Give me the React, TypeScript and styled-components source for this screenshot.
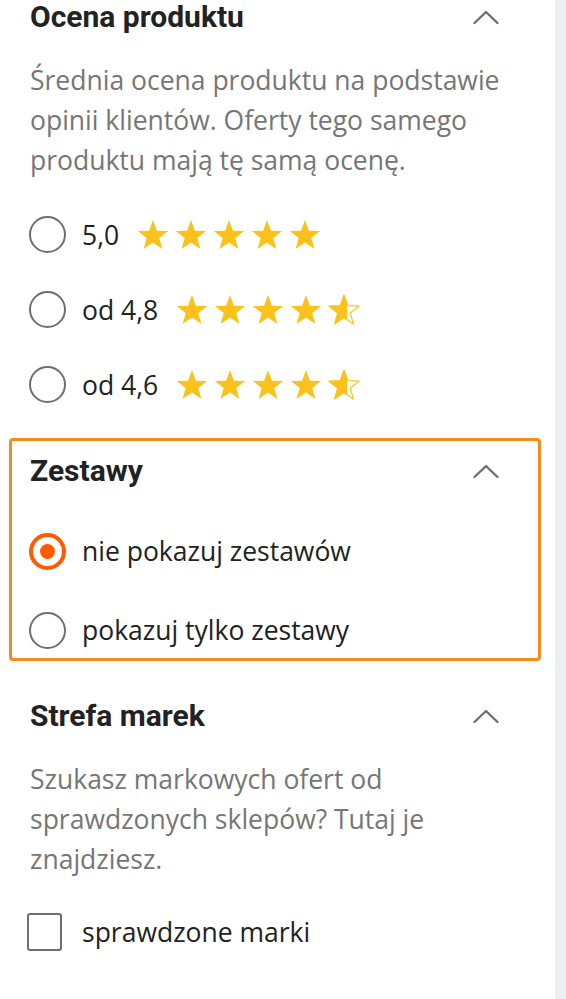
import React from 'react';
import styled, { createGlobalStyle } from 'styled-components';

const GlobalStyle = createGlobalStyle`
  html, body {
    margin: 0;
    padding: 0;
    background: #ffffff;
    overflow: hidden;
  }
`;

const Page = styled.div`
  display: flex;
  width: 566px;
  height: 999px;
  overflow: hidden;
`;

const Panel = styled.div`
  width: 555px;
  background: #ffffff;
`;

const Scrollbar = styled.div`
  flex: 1;
  background: #eceff1;
`;

const Section = styled.section<{ $highlighted?: boolean }>`
  margin: 0 14px 0 9px;
  padding: 0 18px;
  border: 3px solid ${(p) => (p.$highlighted ? '#f58a1f' : 'transparent')};
  border-radius: 4px;
`;

const Header = styled.div`
  display: flex;
  align-items: center;
  justify-content: space-between;
  height: 28px;
  padding-right: 21px;
`;

const Title = styled.h3`
  margin: 0;
  font-family: Roboto, 'Liberation Sans', sans-serif;
  font-weight: 700;
  font-size: 30px;
  line-height: 28px;
  color: #222222;
`;

const Description = styled.p`
  margin: 0;
  font-family: 'Open Sans', 'Liberation Sans', sans-serif;
  font-size: 26.5px;
  line-height: 40px;
  color: #767676;
`;

const OptionList = styled.div<{ $gap?: number }>`
  display: flex;
  flex-direction: column;
  gap: ${(p) => p.$gap ?? 0}px;
`;

const Option = styled.label<{ $height: number }>`
  display: flex;
  align-items: center;
  height: ${(p) => p.$height}px;
  gap: 16px;
  font-family: 'Open Sans', 'Liberation Sans', sans-serif;
  font-size: 26.5px;
  color: #222222;
`;

const Radio = styled.span<{ $checked?: boolean }>`
  box-sizing: border-box;
  flex: none;
  display: flex;
  align-items: center;
  justify-content: center;
  width: 37px;
  height: 37px;
  margin-left: -1px;
  border-radius: 50%;
  border: ${(p) => (p.$checked ? '4px solid #ff5a00' : '2px solid #6f6f6f')};

  &::after {
    content: '';
    display: ${(p) => (p.$checked ? 'block' : 'none')};
    width: 15px;
    height: 15px;
    border-radius: 50%;
    background: #ff5a00;
  }
`;

const Checkbox = styled.span`
  box-sizing: border-box;
  flex: none;
  width: 35px;
  height: 38px;
  margin: 0 4px 0 -3px;
  border: 2px solid #6f6f6f;
  border-radius: 3px;
`;

const Stars = styled.span`
  display: flex;
  gap: 6px;
  margin-left: 2px;
`;

const Chevron = () => (
  <svg width="26" height="16" viewBox="0 0 26 16" fill="none">
    <path d="M1.5 14 L13 3 L24.5 14" stroke="#6f6f6f" strokeWidth="2.4" strokeLinecap="round" strokeLinejoin="round" />
  </svg>
);

const STAR =
  'M16 1 L19.9 11.7 L31.2 12.1 L22.3 19 L25.4 29.9 L16 23.6 L6.6 29.9 L9.7 19 L0.8 12.1 L12.1 11.7 Z';

const Star = ({ fill, id }: { fill: number; id: string }) => (
  <svg width="32" height="31" viewBox="0 0 32 31">
    <defs>
      <clipPath id={id}>
        <rect x="0" y="0" width={32 * fill} height="32" />
      </clipPath>
    </defs>
    {fill < 1 && <path d={STAR} fill="none" stroke="#fbc21b" strokeWidth="1.2" strokeLinejoin="round" />}
    <path d={STAR} fill="#fbc21b" clipPath={`url(#${id})`} />
  </svg>
);

// ratings below 5 show their last star partly filled, as the shop does
const Rating = ({ value, id }: { value: number; id: string }) => (
  <Stars>
    {[0, 1, 2, 3, 4].map((i) => (
      <Star key={i} id={`${id}-${i}`} fill={value - i >= 1 ? 1 : 0.6} />
    ))}
  </Stars>
);

const Gap = styled.div<{ $h: number }>`
  height: ${(p) => p.$h}px;
`;

const ratings = [
  { label: '5,0', value: 5 },
  { label: 'od 4,8', value: 4.8 },
  { label: 'od 4,6', value: 4.6 },
];

const App = () => {
  return (
    <>
      <GlobalStyle />
      <Page>
        <Panel>
          <Section>
            <Header>
              <Title>Ocena produktu</Title>
              <Chevron />
            </Header>
            <Gap $h={29} />
            <Description>
              Średnia ocena produktu na podstawie opinii klientów. Oferty tego samego produktu mają tę samą ocenę.
            </Description>
            <Gap $h={17} />
            <OptionList>
              {ratings.map((r, idx) => (
                <Option key={r.label} $height={75}>
                  <Radio />
                  <span>{r.label}</span>
                  <Rating value={r.value} id={`r${idx}`} />
                </Option>
              ))}
            </OptionList>
          </Section>
          <Gap $h={13} />
          <Section $highlighted>
            <Gap $h={16} />
            <Header>
              <Title>Zestawy</Title>
              <Chevron />
            </Header>
            <Gap $h={40} />
            <OptionList $gap={27}>
              <Option $height={52}>
                <Radio $checked />
                <span>nie pokazuj zestawów</span>
              </Option>
              <Option $height={52}>
                <Radio />
                <span>pokazuj tylko zestawy</span>
              </Option>
            </OptionList>
            <Gap $h={2} />
          </Section>
          <Gap $h={38} />
          <Section>
            <Header>
              <Title>Strefa marek</Title>
              <Chevron />
            </Header>
            <Gap $h={29} />
            <Description>
              Szukasz markowych ofert od sprawdzonych sklepów? Tutaj je znajdziesz.
            </Description>
            <Gap $h={23} />
            <OptionList>
              <Option $height={60}>
                <Checkbox />
                <span>sprawdzone marki</span>
              </Option>
            </OptionList>
          </Section>
        </Panel>
        <Scrollbar />
      </Page>
    </>
  );
};

export default App;
